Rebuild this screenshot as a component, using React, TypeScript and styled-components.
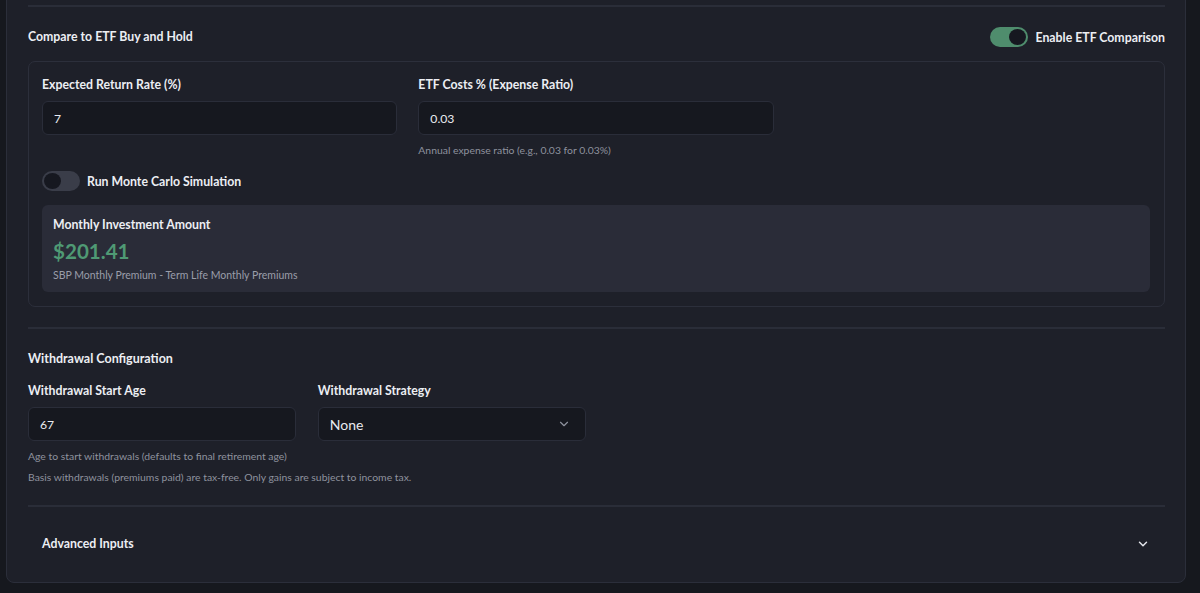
import React from "react";
import styled, { createGlobalStyle } from "styled-components";
import { ChevronDown } from "lucide-react";

const GlobalStyle = createGlobalStyle`
  html, body {
    margin: 0;
    padding: 0;
    background: #16181e;
    font-family: Lato, "Noto Sans", sans-serif;
    color: #e4e6ec;
  }
  * { box-sizing: border-box; }
`;

const Page = styled.div`
  height: 593px;
  overflow: hidden;
  padding: 0 14px 0 6px;
`;

const Card = styled.div`
  margin-top: -36px;
  background: #1e2029;
  border: 1px solid #2b2e3a;
  border-radius: 8px;
  padding: 40px 20px 0 21px;
  height: 619px;
`;

const Divider = styled.div`
  height: 2px;
  background: #2a2d38;
`;

const Section = styled.div<{ pad: string }>`
  padding: ${(p) => p.pad};
`;

const HeaderRow = styled.div`
  display: flex;
  align-items: center;
  justify-content: space-between;
  height: 20px;
`;

const Title = styled.div<{ size?: number }>`
  font-size: ${(p) => p.size ?? 12.3}px;
  line-height: 18px;
  font-weight: 700;
  color: #eceef3;
`;

const ToggleLabel = styled.label`
  display: flex;
  align-items: center;
  gap: 7px;
  font-size: 12.3px;
  font-weight: 700;
  color: #eceef3;
`;

const Switch = styled.span<{ on: boolean }>`
  position: relative;
  width: 38px;
  height: 20px;
  border-radius: 10px;
  background: ${(p) => (p.on ? "#4f8d6d" : "#3a3d49")};
  flex-shrink: 0;
  &::after {
    content: "";
    position: absolute;
    top: 2px;
    left: ${(p) => (p.on ? "19px" : "2px")};
    width: 17px;
    height: 16px;
    border-radius: 50%;
    background: #161820;
  }
`;

const InnerBox = styled.div`
  margin-top: 14px;
  border: 1px solid #2c2f3b;
  border-radius: 7px;
  padding: 14px 14px 14px 13px;
`;

const Grid = styled.div<{ cols: number; gap: number; top?: number }>`
  display: grid;
  grid-template-columns: repeat(${(p) => p.cols}, 1fr);
  column-gap: ${(p) => p.gap}px;
  margin-top: ${(p) => p.top ?? 0}px;
`;

const Field = styled.div`
  display: flex;
  flex-direction: column;
`;

const Label = styled.div`
  font-size: 12.3px;
  font-weight: 700;
  color: #eceef3;
  height: 18px;
  line-height: 18px;
  margin-bottom: 7px;
`;

const Input = styled.div<{ big?: boolean }>`
  height: 34px;
  display: flex;
  align-items: center;
  justify-content: space-between;
  padding: 0 14px 0 11px;
  background: #16181f;
  border: 1px solid #2a2d39;
  border-radius: 6px;
  font-size: ${(p) => (p.big ? 14 : 12.2)}px;
  color: #e8eaef;
`;

const Help = styled.div<{ top: number }>`
  font-size: 10.4px;
  color: #8e929e;
  margin-top: ${(p) => p.top}px;
  line-height: 14px;
`;

const MonteRow = styled.div`
  margin-top: 14px;
`;

const AmountBox = styled.div`
  margin-top: 14px;
  background: #2a2c38;
  border-radius: 6px;
  padding: 11px 11px 10px;
`;

const Amount = styled.div`
  font-size: 20.6px;
  font-weight: 700;
  color: #4f9a74;
  line-height: 28px;
  margin-top: 3px;
`;

const Sub = styled.div`
  font-size: 10.5px;
  line-height: 14px;
  color: #9a9eaa;
  margin-top: 3px;
`;

const AdvancedRow = styled.div`
  display: flex;
  align-items: center;
  justify-content: space-between;
  padding: 28px 15px 0 14px;
  color: #e4e6ec;
`;

export default function App() {
  return (
    <>
      <GlobalStyle />
      <Page>
        <Card>
          <Divider />
          <Section pad="20px 0 20px">
            <HeaderRow>
              <Title>Compare to ETF Buy and Hold</Title>
              <ToggleLabel>
                <Switch on />
                Enable ETF Comparison
              </ToggleLabel>
            </HeaderRow>
            <InnerBox>
              <Grid cols={3} gap={21}>
                <Field>
                  <Label>Expected Return Rate (%)</Label>
                  <Input>7</Input>
                </Field>
                <Field>
                  <Label>ETF Costs % (Expense Ratio)</Label>
                  <Input>0.03</Input>
                  <Help top={8}>Annual expense ratio (e.g., 0.03 for 0.03%)</Help>
                </Field>
              </Grid>
              <MonteRow>
                <ToggleLabel>
                  <Switch on={false} />
                  Run Monte Carlo Simulation
                </ToggleLabel>
              </MonteRow>
              <AmountBox>
                <Title>Monthly Investment Amount</Title>
                <Amount>$201.41</Amount>
                <Sub>SBP Monthly Premium - Term Life Monthly Premiums</Sub>
              </AmountBox>
            </InnerBox>
          </Section>
          <Divider />
          <Section pad="21px 0 21px">
            <Title size={12.5}>Withdrawal Configuration</Title>
            <Grid cols={4} gap={22} top={14}>
              <Field>
                <Label>Withdrawal Start Age</Label>
                <Input>67</Input>
              </Field>
              <Field>
                <Label>Withdrawal Strategy</Label>
                <Input big>
                  None
                  <ChevronDown size={14} color="#8e929e" strokeWidth={2} />
                </Input>
              </Field>
            </Grid>
            <Help top={8}>Age to start withdrawals (defaults to final retirement age)</Help>
            <Help top={7}>Basis withdrawals (premiums paid) are tax-free. Only gains are subject to income tax.</Help>
          </Section>
          <Divider />
          <AdvancedRow>
            <Title>Advanced Inputs</Title>
            <ChevronDown size={14} color="#e4e6ec" strokeWidth={2.5} />
          </AdvancedRow>
        </Card>
      </Page>
    </>
  );
}
